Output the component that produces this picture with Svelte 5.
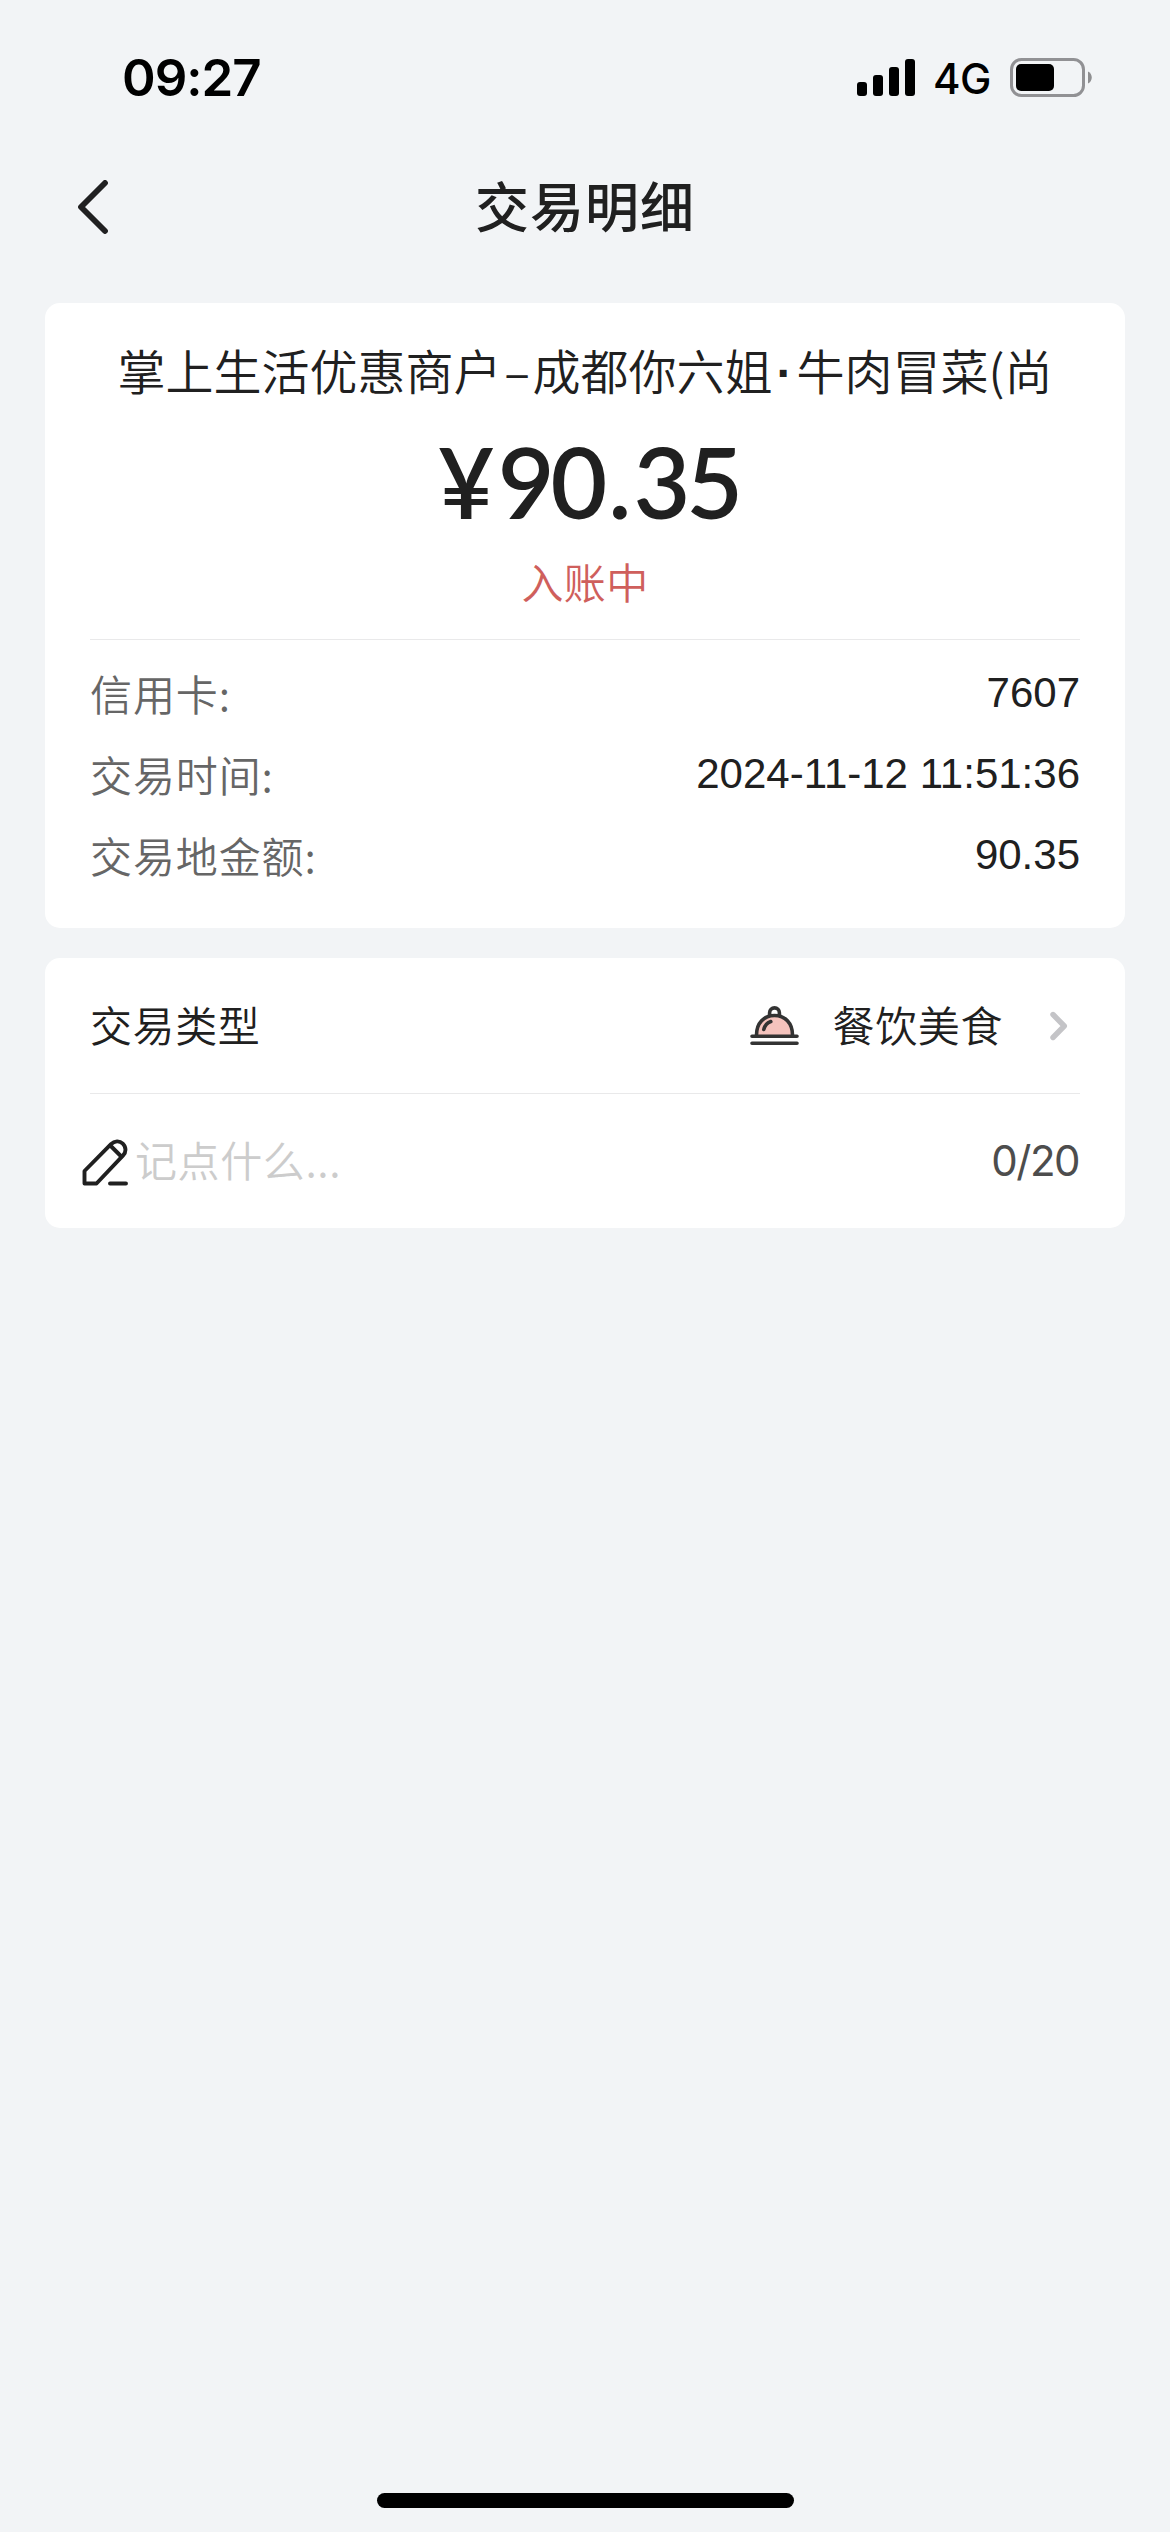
<script>
  let merchant = ['掌上生活优惠商户', '–', '成都你六姐', '·', '牛肉冒菜', '(', '尚'];
  let amount = ['90', '.', '35'];
  let status = '入账中';
  let category = '餐饮美食';
  let note = '';
  const maxLength = 20;

  let details = [
    { label: '信用卡:', value: '7607' },
    { label: '交易时间:', value: '2024-11-12 11:51:36' },
    { label: '交易地金额:', value: '90.35' }
  ];

  let bars = [14, 21, 29, 37];
</script>

<div class="page">
  <div class="status-bar">
    <span class="time">09:27</span>
    <div class="signal">
      {#each bars as height}
        <i style="height: {height}px"></i>
      {/each}
    </div>
    <span class="network">4G</span>
    <svg class="battery" width="82" height="39" viewBox="0 0 82 39">
      <rect x="1.5" y="1.5" width="72" height="36" rx="10" fill="none" stroke="#919194" stroke-width="3" />
      <rect x="6" y="6" width="38" height="27" rx="5" fill="#000" />
      <path d="M78 13.500c5 2 5 10 0 12z" fill="#8e8e90" />
    </svg>
  </div>

  <header>
    <button class="back" aria-label="返回">
      <svg width="30" height="54" viewBox="0 0 30 54">
        <path d="M27 3L3 27l24 24" fill="none" stroke="#202021" stroke-width="5.8" stroke-linecap="round" stroke-linejoin="round" />
      </svg>
    </button>
    <h1>交易明细</h1>
  </header>

  <section class="card summary">
    <p class="merchant">
      {#each merchant as part}<span class:dash={part === '–'} class:dot={part === '·'} class:paren={part === '('}>{part}</span>{/each}
    </p>
    <p class="amount"><span class="yen">¥</span>{amount[0]}<span class="point">{amount[1]}</span>{amount[2]}</p>
    <p class="state">{status}</p>

    <div class="details">
      {#each details as item}
        <div class="detail">
          <span class="label">{item.label}</span>
          <span class="value">{item.value}</span>
        </div>
      {/each}
    </div>
  </section>

  <section class="card">
    <div class="row type">
      <span class="name">交易类型</span>
      <svg class="dish" width="49" height="40" viewBox="0 0 49 40">
        <path d="M6.500 30C6.500 17 14 9.500 24.500 9.500S42.500 17 42.500 30z" fill="#f5c3bd" />
        <g fill="none" stroke="#333" stroke-width="3.6" stroke-linecap="round">
          <path d="M6.500 29C6.500 17 14 9.500 24.500 9.500S42.500 17 42.500 29" />
          <path d="M19.600 9V6.800a4.900 4.900 0 0 1 9.800 0V9" />
          <path d="M13.800 23.500c.8-3.800 3.200-6.600 7-8" />
          <path d="M2 30.200h45M2 37.300h45" />
        </g>
      </svg>
      <span class="category">{category}</span>
      <svg class="arrow" width="18" height="30" viewBox="0 0 18 30">
        <path d="M3 3.500L14.300 15 3 26.500" fill="none" stroke="#c4c4c7" stroke-width="5.4" stroke-linecap="round" stroke-linejoin="round" />
      </svg>
    </div>
    <div class="row note">
      <svg class="pencil" width="48" height="48" viewBox="0 0 48 48">
        <g fill="none" stroke="#202020" stroke-width="3.9" stroke-linecap="round" stroke-linejoin="round">
          <path d="M2.500 44.500V32L29 5.200c3.500-3.600 8.500-3.800 11.800-.6 3.600 3.500 3.500 8.600.1 12.100L14.500 44.500z" />
          <path d="M28.300 6.500l11 11M28 44.500h16" />
        </g>
      </svg>
      <input bind:value={note} maxlength={maxLength} placeholder="记点什么..." />
      <span class="count">{note.length}/{maxLength}</span>
    </div>
  </section>

  <div class="home-bar"></div>
</div>

<style>
  :global(body) {
    background: #f2f4f6;
  }

  .page {
    display: flex;
    flex-direction: column;
    box-sizing: border-box;
    width: 1170px;
    height: 2532px;
    padding: 0 45px 24px;
    background: #f2f4f6;
    color: #202020;
    font-family: "Liberation Sans", "Noto Sans CJK SC", sans-serif;
  }

  p,
  h1 {
    margin: 0;
  }

  svg {
    display: block;
    flex: none;
  }

  .status-bar {
    display: flex;
    align-items: center;
    height: 155px;
    padding: 0 33px 0 77px;
    color: #000;
    font-family: Inter, sans-serif;
  }

  .time {
    flex: 1;
    font-size: 51px;
    font-weight: 600;
    letter-spacing: -1px;
  }

  .signal {
    display: flex;
    align-items: flex-end;
    gap: 6px;
    height: 37px;
  }

  .signal i {
    width: 10px;
    border-radius: 3px;
    background: #000;
  }

  .network {
    width: 76px;
    padding-left: 18px;
    box-sizing: border-box;
    font-size: 42px;
    font-weight: 450;
    letter-spacing: -0.5px;
    margin-top: 2px;
  }

  .battery {
    margin-left: 19px;
  }

  header {
    position: relative;
    display: flex;
    align-items: center;
    justify-content: center;
    height: 99px;
    margin-bottom: 49px;
  }

  .back {
    position: absolute;
    left: 33px;
    top: 25px;
    padding: 0;
    border: none;
    background: none;
  }

  h1 {
    font-family: "Noto Sans CJK SC", sans-serif;
    font-size: 54px;
    font-weight: 500;
    line-height: 80px;
    letter-spacing: 1px;
  }

  .card {
    padding: 0 45px;
    border-radius: 15px;
    background: #fff;
  }

  .summary {
    height: 625px;
    margin-bottom: 30px;
    text-align: center;
  }

  .merchant {
    padding-top: 30px;
    font-family: "Noto Sans CJK SC", sans-serif;
    font-size: 48px;
    font-weight: 350;
    line-height: 72px;
    white-space: nowrap;
  }

  .merchant span {
    display: inline-block;
  }

  .merchant .dash {
    width: 31px;
  }

  .merchant .dot {
    width: 24px;
    font-family: "Liberation Sans", sans-serif;
    font-weight: 700;
    line-height: 1;
  }

  .merchant .paren {
    width: 16px;
  }

  .amount {
    height: 153px;
    padding-left: 7px;
    font-family: Lato, sans-serif;
    font-size: 98px;
    font-weight: 600;
    line-height: 153px;
    letter-spacing: -4px;
  }

  .yen {
    margin-right: 7px;
  }

  .point {
    margin: 0 6px 0 5px;
  }

  .state {
    height: 81px;
    color: #cf5f5c;
    font-family: "Noto Sans CJK SC", sans-serif;
    font-size: 42px;
    font-weight: 350;
    line-height: 46px;
    letter-spacing: 0.3px;
  }

  .details {
    padding-top: 15px;
    border-top: 1px solid #e9e9ea;
  }

  .detail {
    display: flex;
    justify-content: space-between;
    height: 81px;
    font-size: 42px;
    line-height: 75px;
  }

  .label {
    color: #666;
    font-family: "Noto Sans CJK SC", sans-serif;
    font-weight: 350;
    letter-spacing: 0.9px;
  }

  .row {
    display: flex;
    align-items: center;
    height: 135px;
    font-family: "Noto Sans CJK SC", sans-serif;
    font-size: 42px;
    font-weight: 350;
    line-height: 62px;
  }

  .type {
    border-bottom: 1px solid #e9e9ea;
  }

  .name {
    flex: 1;
    padding-bottom: 4px;
    letter-spacing: 0.6px;
  }

  .category {
    margin: 0 47px 0 34px;
    padding-bottom: 4px;
    letter-spacing: 0.6px;
  }

  .arrow {
    margin-right: 12px;
  }

  .note {
    height: 134px;
  }

  .pencil {
    margin: 4px 5px 0 -8px;
  }

  input {
    flex: 1;
    min-width: 0;
    padding: 0 0 5px;
    border: none;
    outline: none;
    background: none;
    color: #202020;
    font: inherit;
    letter-spacing: 0.6px;
  }

  input::placeholder {
    color: #ccc;
    opacity: 1;
  }

  .count {
    margin-right: 1px;
    color: #4d4d4d;
    font-family: Inter, sans-serif;
    font-weight: 400;
    letter-spacing: -1.5px;
  }

  .home-bar {
    width: 417px;
    height: 15px;
    margin: auto auto 0;
    border-radius: 8px;
    background: #000;
  }
</style>
